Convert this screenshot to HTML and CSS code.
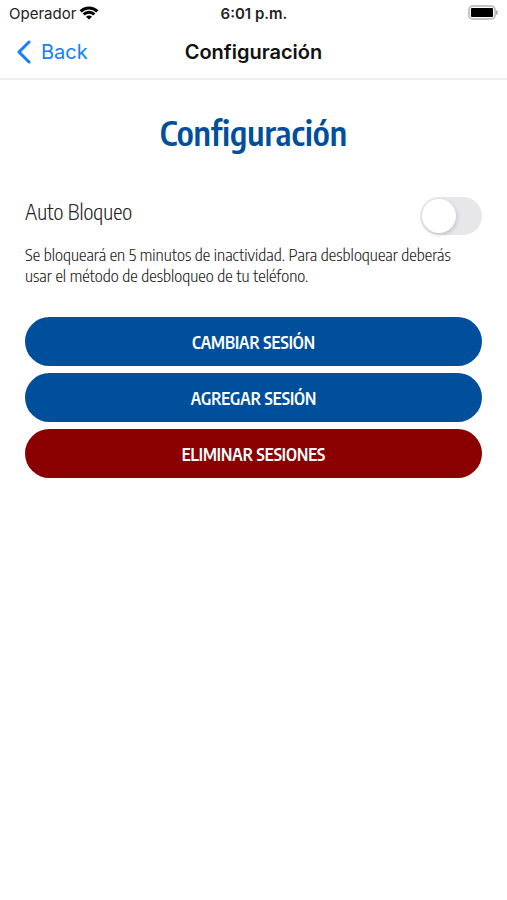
FILE: index.html
```html
<!DOCTYPE html>
<html lang="es">
<head>
  <meta charset="UTF-8" />
  <meta name="viewport" content="width=device-width, initial-scale=1.0"/>
  <title>Configuración</title>
  <link rel="stylesheet" href="styles.css">
</head>
<body>

  <div class="status-bar">
    <div class="carrier">
      <span>Operador</span>
      <svg class="wifi" viewBox="0 0 20 14" aria-hidden="true">
        <path d="M1.6 5.4 C6.2 0.7 13.8 0.7 18.4 5.4" />
        <path d="M4.7 8.4 C7.6 5.5 12.4 5.5 15.3 8.4" />
        <path class="dot" d="M10 13.6 L7 10.7 C8.6 9.2 11.4 9.2 13 10.7 Z" />
      </svg>
    </div>
    <span class="time">6:01 p.m.</span>
    <svg class="battery" viewBox="0 0 32 16" aria-hidden="true">
      <rect class="case" x="2" y="1" width="26" height="13" rx="4" />
      <rect class="level" x="4" y="3" width="22" height="9" rx="1" />
      <path class="tip" d="M29 5 C31.5 6 31.5 9 29 10 Z" />
    </svg>
  </div>

  <header class="nav-bar">
    <a href="#" class="back">
      <svg class="chevron" viewBox="0 0 16 24" aria-hidden="true">
        <path d="M13 2 L3 12 L13 22" />
      </svg>
      Back
    </a>
    <span class="nav-title">Configuración</span>
  </header>

  <main class="container">
    <h1>Configuración</h1>

    <div class="setting">
      <label for="autoLock">Auto Bloqueo</label>
      <input type="checkbox" id="autoLock" class="switch" role="switch" aria-describedby="autoLockHelp" />
    </div>
    <p class="help" id="autoLockHelp">Se bloqueará en 5 minutos de inactividad. Para desbloquear deberás usar el método de desbloqueo de tu teléfono.</p>

    <div class="actions">
      <button type="button">CAMBIAR SESIÓN</button>
      <button type="button">AGREGAR SESIÓN</button>
      <button type="button" class="danger">ELIMINAR SESIONES</button>
    </div>
  </main>

</body>
</html>
```

FILE: styles.css
```css
* {
  box-sizing: border-box;
  margin: 0;
  padding: 0;
}
body {
  background: #fff;
  color: #222;
  font-family: "Encode Sans Condensed", "Open Sans Condensed", "Noto Sans Condensed", "Roboto Condensed", Roboto, sans-serif;
  font-weight: 300;
}
.status-bar,
.nav-bar {
  display: grid;
  grid-template-columns: 1fr auto 1fr;
  align-items: center;
  font-family: Inter, sans-serif;
  font-weight: 400;
}
.status-bar {
  height: 26px;
  padding: 0 8px 0 9px;
  font-size: 15px;
}
.carrier {
  display: flex;
  align-items: center;
  gap: 3px;
}
.wifi {
  width: 20px;
  height: 14px;
  fill: none;
  stroke: #000;
  stroke-width: 3;
}
.wifi .dot {
  fill: #000;
  stroke: none;
}
.time {
  font-weight: 600;
}
.battery {
  width: 32px;
  height: 16px;
  justify-self: end;
}
.battery .case {
  fill: #fff;
  stroke: #c4c4c4;
  stroke-width: 2;
}
.battery .level {
  fill: #000;
}
.battery .tip {
  fill: #aaa;
}
.nav-bar {
  height: 54px;
  padding: 0 16px;
  border-bottom: 2px solid #f0f0f0;
  font-size: 20px;
}
.back {
  display: flex;
  align-items: center;
  gap: 9px;
  color: #147efb;
  text-decoration: none;
}
.chevron {
  width: 16px;
  height: 24px;
  fill: none;
  stroke: #147efb;
  stroke-width: 3;
  stroke-linecap: round;
  stroke-linejoin: round;
}
.nav-title {
  font-weight: 600;
  color: #111;
}
.container {
  padding: 26px 25px;
}
h1 {
  margin-bottom: 38px;
  color: #004f9c;
  font-size: 34px;
  font-weight: 600;
  line-height: 52px;
  text-align: center;
}
.setting {
  display: flex;
  justify-content: space-between;
  align-items: center;
  height: 40px;
}
.setting label {
  padding-bottom: 10px;
  font-size: 21px;
}
.switch {
  appearance: none;
  width: 62px;
  height: 38px;
  padding: 2px;
  border-radius: 19px;
  background: #e7e7e9;
  cursor: pointer;
}
.switch::before {
  content: "";
  display: block;
  width: 34px;
  height: 34px;
  border-radius: 50%;
  background: #fff;
  box-shadow: 1px 2px 4px rgba(0, 0, 0, 0.15);
}
.switch:checked {
  background: #34c759;
}
.switch:checked::before {
  margin-left: 24px;
}
.help {
  margin: 8px 0 31px;
  padding-right: 16px;
  font-size: 17px;
  line-height: 21px;
}
.actions {
  display: flex;
  flex-direction: column;
  gap: 7px;
}
button {
  height: 49px;
  border: none;
  border-radius: 25px;
  background: #004f9c;
  color: #fff;
  font-family: inherit;
  font-size: 17px;
  font-weight: 600;
  cursor: pointer;
}
button.danger {
  background: #8b0000;
}
```
